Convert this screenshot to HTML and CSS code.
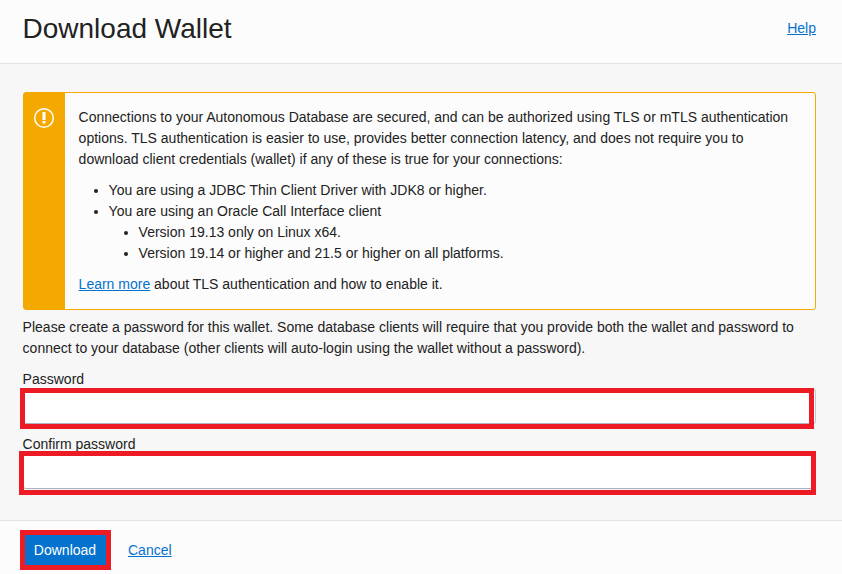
FILE: index.html
```html
<!DOCTYPE html>
<html lang="en">
<head>
<meta charset="utf-8">
<title>Download Wallet</title>
<link rel="stylesheet" href="styles.css">
</head>
<body>
<div class="dialog">
  <header class="header">
    <h1 class="title">Download Wallet</h1>
    <a class="link help" href="#">Help</a>
  </header>
  <main class="content">
    <section class="notice">
      <div class="notice-band">
        <svg class="notice-icon" width="22" height="22" viewBox="0 0 22 22" fill="none">
          <circle cx="11" cy="11" r="9.3" stroke="#fff" stroke-width="1.5"/>
          <path d="M9.5 5h3v8h-3zM9.5 14h3v2.5h-3z" fill="#fff"/>
        </svg>
      </div>
      <div class="notice-text">
        <p>Connections to your Autonomous Database are secured, and can be authorized using TLS or mTLS authentication<br>options. TLS authentication is easier to use, provides better connection latency, and does not require you to<br>download client credentials (wallet) if any of these is true for your connections:</p>
        <ul>
          <li>You are using a JDBC Thin Client Driver with JDK8 or higher.</li>
          <li>You are using an Oracle Call Interface client
            <ul>
              <li>Version 19.13 only on Linux x64.</li>
              <li>Version 19.14 or higher and 21.5 or higher on all platforms.</li>
            </ul>
          </li>
        </ul>
        <p><a class="link" href="#">Learn more</a> about TLS authentication and how to enable it.</p>
      </div>
    </section>
    <p class="intro">Please create a password for this wallet. Some database clients will require that you provide both the wallet and password to<br>connect to your database (other clients will auto-login using the wallet without a password).</p>
    <div class="field">
      <label for="password">Password</label>
      <div class="control">
        <input id="password" type="password">
        <span class="highlight highlight-password"></span>
      </div>
    </div>
    <div class="field">
      <label for="confirm">Confirm password</label>
      <div class="control">
        <input id="confirm" type="password">
        <span class="highlight highlight-confirm"></span>
      </div>
    </div>
  </main>
  <footer class="footer">
    <div class="action">
      <button class="download" type="button">Download</button>
      <span class="highlight highlight-download"></span>
    </div>
    <a class="link" href="#">Cancel</a>
  </footer>
</div>
</body>
</html>
```
FILE: styles.css
```css
* { box-sizing: border-box; }

body {
  margin: 0;
  color: #222;
  background: #f7f7f7;
  font: 14px/21px "Liberation Sans", Arial, sans-serif;
}

.dialog {
  display: flex;
  flex-direction: column;
  height: 574px;
  overflow: hidden;
}

.header {
  display: flex;
  justify-content: space-between;
  height: 64px;
  padding: 0 26px 0 23px;
  background: #fcfcfc;
  border-bottom: 1px solid #e3e3e3;
}

.title {
  margin: 12px 0 0 -0.5px;
  font-size: 28px;
  line-height: 33px;
  font-weight: 400;
}

.help { margin-top: 18px; }

.link {
  color: #0572ce;
  text-decoration: underline;
}

.content {
  flex: 1;
  padding: 28px 26px 0 23px;
}

.notice {
  display: flex;
  height: 218px;
  background: #fcfcfc;
  border: 1px solid #f5a800;
  border-radius: 3px;
}

.notice-band {
  width: 41px;
  padding: 14px 0 0 9px;
  background: #f5a800;
}

.notice-icon { display: block; }

.notice-text {
  padding: 14px 0 0 13.6px;
  white-space: nowrap;
}

.notice-text p { margin: 0; }

.notice-text ul {
  margin: 10px 0;
  padding-left: 30px;
  list-style: disc;
}

.notice-text ul ul { margin: 0; }

.intro {
  margin: 7px 0 10px -0.4px;
  white-space: nowrap;
}

.field { height: 65px; }

.field label {
  display: block;
  height: 20px;
  margin-left: -0.4px;
}

.control {
  position: relative;
  height: 35px;
}

.control input {
  display: block;
  width: 100%;
  height: 35px;
  padding: 0 10px;
  background: #fff;
  border: 1px solid #c3c8d0;
  border-bottom-color: #aab2bf;
  border-radius: 3px;
}

.highlight {
  position: absolute;
  border: 5px solid #ed1c24;
  pointer-events: none;
}

.highlight-password { inset: -1px 2px -5px -3px; }
.highlight-confirm { inset: -3px 0 -6px -4px; }
.highlight-download { inset: -4px -4px -4px -3px; }

.footer {
  display: flex;
  height: 54px;
  padding: 13px 0 0 23px;
  background: #fcfcfc;
  border-top: 1px solid #e3e3e3;
  line-height: 32px;
}

.action {
  position: relative;
  width: 84px;
  height: 32px;
  margin-right: 21px;
}

.download {
  width: 100%;
  height: 32px;
  padding: 0;
  color: #fff;
  background: #0572ce;
  border: 0;
  border-radius: 3px;
  font: inherit;
}
```
